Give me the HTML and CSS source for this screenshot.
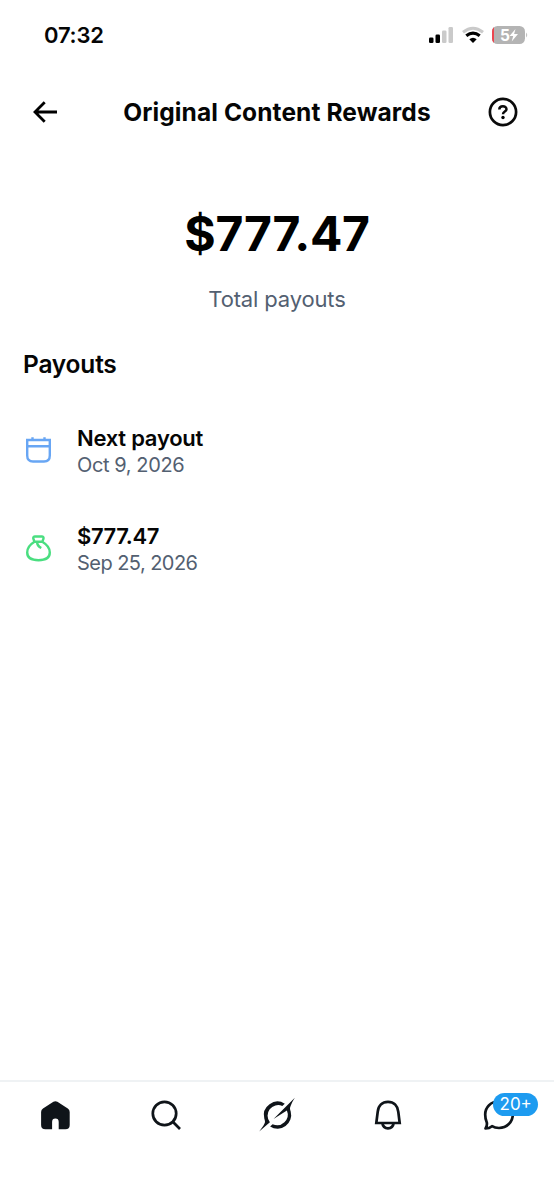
FILE: index.html
```html
<!DOCTYPE html>
<html lang="en">
<head>
<meta charset="utf-8">
<meta name="viewport" content="width=device-width, initial-scale=1">
<title>Original Content Rewards</title>
<link rel="stylesheet" href="styles.css">
</head>
<body>
<div class="screen">
  <div class="status">
    <span class="clock">07:32</span>
    <div class="indicators">
      <svg width="26" height="18" viewBox="0 0 26 18"><rect x="1" y="11.5" width="4.500" height="5.5" rx="1.3"/><rect x="7.500" y="8.5" width="4.500" height="8.5" rx="1.3"/><g fill="#cacaca"><rect x="14" y="4.5" width="4.500" height="12.5" rx="1.3"/><rect x="20.500" y="1" width="4.500" height="16" rx="1.3"/></g></svg>
      <svg class="wifi" width="24" height="18" viewBox="0 0 24 18"><path d="M2 6.2Q12-1.7 22 6.2" fill="none" stroke="#cacaca" stroke-width="3"/><path d="M5.3 9.8Q12 4.5 18.700 9.800" fill="none" stroke="#000" stroke-width="3.2"/><path d="M8.300 13.200Q12 10.200 15.700 13.200L12 17Z"/></svg>
      <svg class="battery" width="36" height="20" viewBox="0 0 36 20"><defs><clipPath id="cell"><rect x="0" y="1" width="33" height="18" rx="5.500"/></clipPath></defs><g clip-path="url(#cell)"><rect y="1" width="33" height="18" fill="#b4b4b4"/><rect y="1" width="2" height="18" fill="#ec4650"/></g><path d="M34.200 7.500q2 2.500 0 5z" fill="#b4b4b4"/><text x="8" y="15.500">5</text><path d="M23.500 4l-6 7h3.700l-1.500 5.500 6.300-7.500h-3.900z" fill="#fff"/></svg>
    </div>
  </div>
  <header class="header">
    <svg width="26" height="24" viewBox="0 0 26 24"><path d="M11.700 2.300L2 12L11.700 21.700M2 12H24" fill="none" stroke="#000" stroke-width="2.800"/></svg>
    <h1>Original Content Rewards</h1>
    <svg width="30" height="30" viewBox="0 0 30 30"><circle cx="15" cy="15" r="13.100" fill="none" stroke="#0a0a0a" stroke-width="2.700"/><path d="M11.300 12.500C11.300 8 18.500 8.200 18.500 12.200C18.500 14.700 15 14.500 15 17.300" fill="none" stroke="#0a0a0a" stroke-width="2.500"/><circle cx="15" cy="20.500" r="1.700"/></svg>
  </header>
  <section class="total">
    <div class="amount">$777.47</div>
    <div class="caption">Total payouts</div>
  </section>
  <main class="payouts">
    <h2>Payouts</h2>
    <div class="row">
      <svg width="30" height="32" viewBox="0 0 30 32"><path d="M4.200 6H26.800V21.500Q26.800 27.500 21 27.500H10Q4.200 27.500 4.200 21.500ZM4.200 12.200H26.800M9.500 3.200V6M21.500 3.200V6" fill="none" stroke="#68a6f4" stroke-width="2.400"/></svg>
      <div><div class="name next">Next payout</div><div class="date oct">Oct 9, 2026</div></div>
    </div>
    <div class="row">
      <svg width="30" height="32" viewBox="0 0 30 32"><path d="M11.500 9.800L10.300 6.500Q10 4.500 12 4.500H18.800Q20.800 4.500 20.500 6.500L19.300 9.800ZM11.500 9.800C7 12.500 4.200 16.500 4.200 20.500C4.200 25.800 8 28.200 15.500 28.200S26.800 25.800 26.800 20.500C26.800 16.500 23.800 12.500 19.300 9.800M14 10C14.300 12.800 15.700 14.800 18.300 16" fill="none" stroke="#4ade80" stroke-width="2.400" stroke-linejoin="round"/></svg>
      <div><div class="name sum">$777.47</div><div class="date sep">Sep 25, 2026</div></div>
    </div>
  </main>
  <nav class="tabs">
    <div><svg width="36" height="36" viewBox="0 0 36 36"><path d="M16.400 4.800Q18.400 3.500 20.400 4.800L30.800 11.400Q32.700 12.700 32.700 15V28Q32.700 32.300 28.400 32.300H21.700V25Q21.700 21.600 18.400 21.600T15.100 25V32.300H8.400Q4.100 32.300 4.100 28V15Q4.100 12.700 6 11.400Z" fill="#0f1419" stroke="none"/></svg></div>
    <div><svg width="36" height="36" viewBox="0 0 36 36"><circle cx="16.500" cy="16.500" r="11.700"/><path d="M24.800 24.800L32 32"/></svg></div>
    <div><svg width="36" height="36" viewBox="0 0 36 36"><g stroke="none" fill="#0f1419"><path d="M25.800 6.700A13.600 13.600 0 0 0 5.300 21.500C5.900 23.700 6.500 24.800 5.400 26.700C4.200 29.200 2.200 31.800.2 34.500L10.900 25.300A10.600 10.600 0 0 1 23.300 8.900Z"/><path d="M35.800.7L14.500 22L27.900 13.600A10.600 10.600 0 0 1 13.600 27.200L11.100 29.400A13.600 13.600 0 0 0 31.700 14.500C31 12.400 30.600 10.800 31.600 8.900C32.600 6.100 34.200 3.500 35.800.7Z"/></g></svg></div>
    <div><svg width="36" height="36" viewBox="0 0 36 36"><path d="M6.300 26L7.700 14.800C8.300 8.500 12.300 4.800 18 4.800S27.700 8.500 28.300 14.800L29.700 26ZM12.300 26C12.800 29.300 15 31.300 18 31.300S23.200 29.300 23.700 26"/></svg></div>
    <div class="messages"><svg width="36" height="36" viewBox="0 0 36 36"><path d="M4.500 31.400C6 29.200 6.300 27.500 5.700 25.200C4.500 22.500 4.200 20 4.200 17.500C4.200 10 10 4.500 17.500 4.500S31.800 10 31.800 17.500S25.800 31 18 31C15.300 31 13 30.500 11 29.200C9.200 30.700 6.500 31.400 4.500 31.400Z" stroke-linejoin="round"/></svg><span class="badge">20+</span></div>
  </nav>
</div>
</body>
</html>
```

FILE: styles.css
```css
* { box-sizing: border-box; }
body { margin: 0; background: #fff; color: #050505; font-family: Inter, "Liberation Sans", sans-serif; }
svg { display: block; flex: none; }
.screen { width: 554px; height: 1199px; display: flex; flex-direction: column; background: #fff; }
.status { height: 72px; padding: 0 26px 2px 44px; display: flex; align-items: center; justify-content: space-between; }
.clock { font-size: 22px; font-weight: 600; line-height: 28px; letter-spacing: -0.200px; }
.indicators { display: flex; align-items: center; }
.wifi { margin-left: 7px; }
.battery { margin-left: 7px; }
.battery text { font: 700 15.500px Inter, sans-serif; fill: #fff; }
.header { height: 80px; padding: 0 36px 0 33px; display: grid; grid-template-columns: 30px 1fr 30px; align-items: center; }
.header h1 { margin: 0 0 0 3px; font-size: 24.500px; font-weight: 650; letter-spacing: 0.100px; text-align: center; white-space: nowrap; }
.total { height: 170px; text-align: center; padding-top: 52px; }
.amount { font-size: 48px; font-weight: 700; line-height: 60px; letter-spacing: -0.300px; color: #000; }
.caption { margin-top: 20px; font-size: 22px; line-height: 30px; letter-spacing: -0.150px; color: #536071; }
.payouts { flex: 1; padding: 27px 23px 0; }
h2 { margin: 0 0 46px; font-size: 24.500px; font-weight: 600; line-height: 30px; letter-spacing: -0.200px; }
.row { height: 98px; display: flex; align-items: flex-start; gap: 24px; }
.row svg { margin-top: 9px; }
.name { font-size: 22px; font-weight: 600; line-height: 27px; }
.next { letter-spacing: -0.250px; }
.sum { letter-spacing: -0.400px; }
.date { font-size: 20px; line-height: 26px; color: #536071; }
.oct { letter-spacing: -0.400px; }
.sep { letter-spacing: -0.550px; }
.tabs { height: 119px; border-top: 2px solid #eff2f4; display: grid; grid-template-columns: repeat(5, 1fr); padding-top: 15px; }
.tabs > div { display: flex; justify-content: center; align-items: flex-start; position: relative; }
.tabs svg { fill: none; stroke: #0f1419; stroke-width: 2.700; }
.badge { position: absolute; left: 50px; top: -4px; width: 45px; height: 23px; border-radius: 12px; background: #1d9bf0; color: #fff; font-size: 17px; line-height: 23px; text-align: center; }
```
